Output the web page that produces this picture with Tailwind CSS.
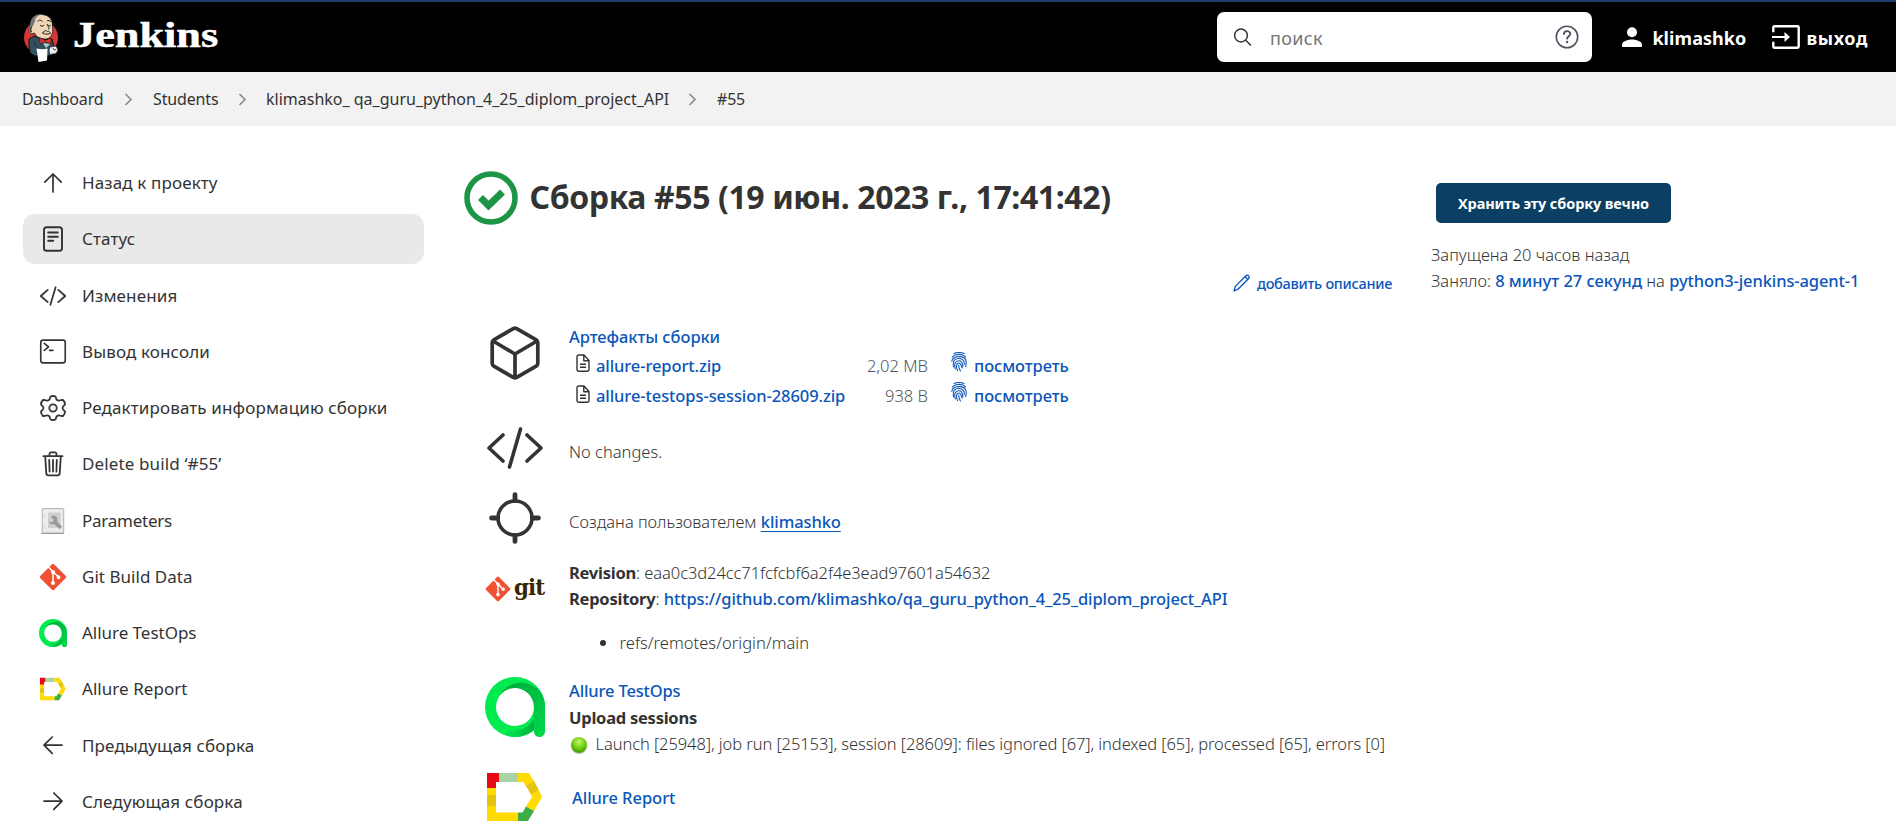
<!DOCTYPE html>
<html lang="ru">
<head>
<meta charset="utf-8">
<title>Сборка #55 – Jenkins</title>
<script src="https://cdn.jsdelivr.net/npm/@tailwindcss/browser@4"></script>
</head>
<body class="bg-white text-[#333] font-['Noto_Sans',sans-serif] text-[16.5px] leading-[26px] h-[822px] overflow-hidden whitespace-nowrap">

<header class="h-[72px] bg-black border-t-2 border-[#1e3e6e] flex text-white">
  <a class="flex pl-[22px]">
    <svg class="w-[38px] h-[51px] mt-[9.5px]" viewBox="0 0 38 51">
      <circle cx="19" cy="25.5" r="17" fill="#d33833"/>
      <path d="M7 27L13 24l8 4 9-1 2 8-1 7-5 2H13l-5-3-1-6z" fill="#335061" stroke="#000" stroke-width=".8"/>
      <path d="M9.500 22C6 20 7 15 8.500 14 9 6 13 2 20 2.500c8 .5 11 6 10.500 13 1 6-1 10-6 11.500-5 0-10-1-12-6z" fill="#f0d6b7" stroke="#111" stroke-width=".8"/>
      <path d="M9.500 22C6 20 6.500 16 8 14 8 5 14 1 21 2.500c-5 .5-7 2-8 6 0 2-1.500 2.500-1.500 5-2 1-2 4-2 8.500z" fill="#70767a"/>
      <path d="M10 15c-2 0-2 4 0 5M15.500 9.500c1-2 4-1.500 5 0M25 9c1-1 3-.5 4 1M18 13c1 1.500 3 1.500 4 0M26 13c1 1 2 1 3 0M25 12c1 3 3 4 1.500 5.500M20.500 21c2-3 4-2.500 5-1.500 2-.5 2.500 1 3 2-2 .5-5 1.500-8-.5z" fill="none" stroke="#222" stroke-width="1"/>
      <path d="M17.500 25.500l5.500 3 6-2.500v6l-6-2-5 2z" fill="#d33833" stroke="#300" stroke-width=".5"/>
      <path d="M21 31l3 5 4-4z" fill="#b8cfda"/>
      <path d="M14.500 36.500c4 1 8 1 11 0l-.5 12-8.500 1.500z" fill="#fff"/>
      <path d="M28 35l6-1 2 4-2 3.500-6 1-1-4z" fill="#eee" stroke="#222" stroke-width=".7"/><path d="M31 36l1 2 2-.5M12 29c2 3 0 5 4 6" fill="none" stroke="#1a2a33" stroke-width=".8"/>
    </svg>
    <span class="ml-[13px] mt-[10px] h-[46px] leading-[46px] font-['Liberation_Serif',serif] font-bold text-[36px] origin-left scale-x-[1.23] [-webkit-text-stroke:.5px_white]">Jenkins</span>
  </a>
  <div class="ml-auto mt-[10px] w-[375px] h-[50px] rounded-[7px] bg-white flex items-center pl-[16px] pr-[13px]">
    <svg class="w-[19px] h-[19px]" viewBox="0 0 19 19" fill="none" stroke="#333" stroke-width="1.5" stroke-linecap="round"><circle cx="8" cy="7.500" r="6.400"/><path d="M12.700 12.200l4.800 4.800"/></svg>
    <span class="ml-[17.500px] pt-[2px] text-[18px] tracking-[.35px] text-[#757575]">поиск</span>
    <svg class="ml-auto w-[24px] h-[24px]" viewBox="0 0 24 24" fill="none" stroke="#4d545d" stroke-width="1.600" stroke-linecap="round"><circle cx="12" cy="12" r="10.700"/><path d="M8.900 9.100c.1-4 6.600-3.800 6.300-.1-.2 2.200-3 2.300-3.100 4.600" stroke-width="1.900"/><circle cx="12.100" cy="17" r=".6" fill="#4d545d" stroke-width="1.200"/></svg>
  </div>
  <a class="ml-[30px] h-[70px] flex items-center font-bold text-[18px]">
    <svg class="w-[20px] h-[20px]" viewBox="0 0 20 20" fill="#fff"><circle cx="10" cy="5.200" r="5"/><path d="M0 20v-2.500c0-3.400 6.500-5 10-5s10 1.600 10 5V20z"/></svg>
    <span class="ml-[10px] pt-[2px] tracking-[.07px]">klimashko</span>
  </a>
  <a class="ml-[26px] mr-[28px] h-[70px] flex items-center font-bold text-[18px]">
    <svg class="w-[28px] h-[24px]" viewBox="0 0 28 24" fill="none" stroke="#fff" stroke-width="2.400"><path d="M1.300 7.200V2.500a1.200 1.200 0 011.200-1.200h23a1.200 1.200 0 011.200 1.200v19a1.200 1.200 0 01-1.200 1.200h-23a1.200 1.200 0 01-1.200-1.200v-4.700"/><path d="M0 12h16" stroke-width="2"/><path d="M12.500 7l5.500 5-5.500 5z" fill="#fff" stroke="none"/></svg>
    <span class="ml-[6px] pt-[2px] tracking-[.6px]">выход</span>
  </a>
</header>

<nav class="h-[54px] bg-[#f2f2f2] flex items-center pl-[22px] text-[16px]">
  <span class="w-[81px] tracking-[-.15px]">Dashboard</span>
  <svg class="ml-[21px] w-[9px] h-[13px]" viewBox="0 0 9 13" fill="none" stroke="#888" stroke-width="1.600"><path d="M1.500 1l5.500 5.500-5.500 5.500"/></svg>
  <span class="ml-[20px] w-[66px] tracking-[-.15px]">Students</span>
  <svg class="ml-[19px] w-[9px] h-[13px]" viewBox="0 0 9 13" fill="none" stroke="#888" stroke-width="1.600"><path d="M1.500 1l5.500 5.500-5.500 5.500"/></svg>
  <span class="ml-[19px] w-[403px]">klimashko_ qa_guru_python_4_25_diplom_project_API</span>
  <svg class="ml-[19px] w-[9px] h-[13px]" viewBox="0 0 9 13" fill="none" stroke="#888" stroke-width="1.600"><path d="M1.500 1l5.500 5.500-5.500 5.500"/></svg>
  <span class="ml-[20px] tracking-[-.2px]">#55</span>
</nav>

<div class="flex">
  <aside class="w-[401px] ml-[23px] pt-[32px] flex flex-col gap-[6.250px] text-[17px] tracking-[.13px]">
    <a class="h-[50px] shrink-0 flex items-center gap-[15px] pl-[16px]"><svg class="w-7 h-7" viewBox="0 0 28 28" fill="none" stroke="#333" stroke-width="1.700" stroke-linecap="round" stroke-linejoin="round"><path d="M5.800 13.200L14 5l8.200 8.200M14 5.500V23"/></svg>Назад к проекту</a>
    <a class="h-[50px] shrink-0 flex items-center gap-[15px] pl-[16px] rounded-[12px] bg-[#e9e9e9]"><svg class="w-7 h-7" viewBox="0 0 28 28" fill="none" stroke="#333" stroke-width="1.900" stroke-linecap="round" stroke-linejoin="round"><rect x="5" y="2.200" width="18" height="23.600" rx="2.600"/><path d="M9.200 7.500h9.600M9.200 11.700h9.600M9.200 15.800h5"/></svg>Статус</a>
    <a class="h-[50px] shrink-0 flex items-center gap-[15px] pl-[16px]"><svg class="w-7 h-7" viewBox="0 0 512 512" fill="none" stroke="#333" stroke-width="32" stroke-linecap="round" stroke-linejoin="round"><path d="M160 368L32 256l128-112M352 368l128-112-128-112M304 96l-96 320"/></svg>Изменения</a>
    <a class="h-[50px] shrink-0 flex items-center gap-[15px] pl-[16px]"><svg class="w-7 h-7" viewBox="0 0 512 512" fill="none" stroke="#333" stroke-width="30" stroke-linecap="round" stroke-linejoin="round"><rect x="32" y="38" width="448" height="416" rx="42"/><path d="M96 98l80 64-80 64M192 226h64"/></svg>Вывод консоли</a>
    <a class="h-[50px] shrink-0 flex items-center gap-[15px] pl-[16px]"><svg class="w-7 h-7" viewBox="0 0 28 28" fill="none" stroke="#333" stroke-width="1.800" stroke-linejoin="round"><circle cx="14" cy="14" r="3.700"/><path d="M11.500 2.500q2.500-1 5 0l1 3q2 1.700 4 .7l2.500-.2q2 1.800 2 4.500l-2 2.200q-1 1.300 0 2.600l2 2.200q0 2.700-2 4.500l-2.500-.2q-2-1-4 .7l-1 3q-2.500 1-5 0l-1-3q-2-1.700-4-.7L4 22q-2-1.800-2-4.500l2-2.200q1-1.300 0-2.600l-2-2.200Q2 7.800 4 6l2.500.2q2 1 4-.7z"/></svg>Редактировать информацию сборки</a>
    <a class="h-[50px] shrink-0 flex items-center gap-[15px] pl-[16px]"><svg class="w-7 h-7" viewBox="0 0 28 28" fill="none" stroke="#333" stroke-width="1.800" stroke-linecap="round" stroke-linejoin="round"><path d="M4.500 6.200h19M6.200 6.500l1.100 16.900a2 2 0 002 1.900h9.400a2 2 0 002-1.900l1.100-16.900M10.500 6V4a1.700 1.700 0 011.700-1.700h3.600A1.700 1.700 0 0117.500 4v2M14 10v11.500M10.200 10l.4 11.500M17.800 10l-.4 11.500"/></svg>Delete build ‘#55’</a>
    <a class="h-[50px] shrink-0 flex items-center gap-[15px] pl-[16px] tracking-[-.05px]"><svg class="w-7 h-7" viewBox="0 0 28 28"><rect x="3.200" y="1.500" width="21.500" height="24.600" rx="1" fill="#e6e6e6" stroke="#b5b5b5"/><rect x="5" y="3" width="18.200" height="21" fill="#ececec"/><rect x="9" y="5.500" width="12.500" height="15.500" fill="#cfcfcf"/><circle cx="5.700" cy="8.500" r=".6" fill="#aaa"/><circle cx="5.700" cy="19" r=".6" fill="#aaa"/><path d="M2.500 26.500h22.500" stroke="#999"/><path d="M12 9.500c2.500-2 6-.8 6.300 2.600.1 1-.2 1.700-.3 2.300l5 5-2.200 2.800-5.800-5.200c-2 .8-4.700 0-5-2l3.300.3 1.500-2.300z" fill="#999"/></svg><span class="tracking-[-.25px]">Parameters</span></a>
    <a class="h-[50px] shrink-0 flex items-center gap-[15px] pl-[16px] tracking-[.03px]"><svg class="w-7 h-7" viewBox="0 0 28 28"><use href="#git"/></svg>Git Build Data</a>
    <a class="h-[50px] shrink-0 flex items-center gap-[15px] pl-[16px] tracking-[-.03px]"><svg class="w-7 h-7" viewBox="0 0 60 60"><use href="#testops"/></svg>Allure TestOps</a>
    <a class="h-[50px] shrink-0 flex items-center gap-[15px] pl-[16px]"><svg class="w-7 h-7" viewBox="0 0 60 60"><use href="#allure"/></svg><span class="tracking-[.05px]">Allure Report</span></a>
    <a class="h-[50px] shrink-0 flex items-center gap-[15px] pl-[16px]"><svg class="w-7 h-7" viewBox="0 0 28 28" fill="none" stroke="#333" stroke-width="1.700" stroke-linecap="round" stroke-linejoin="round"><path d="M13.200 5L5 13.200l8.200 8.200M5.500 13.200H23"/></svg>Предыдущая сборка</a>
    <a class="h-[50px] shrink-0 flex items-center gap-[15px] pl-[16px]"><svg class="w-7 h-7" viewBox="0 0 28 28" fill="none" stroke="#333" stroke-width="1.700" stroke-linecap="round" stroke-linejoin="round"><path d="M14.800 5l8.200 8.200-8.200 8.200M22.500 13.200H5"/></svg>Следующая сборка</a>
  </aside>

  <main class="ml-[40px] w-[928px] pt-[45px] font-light">
    <div class="flex items-center h-[54px]">
      <svg class="w-[54px] h-[54px]" viewBox="0 0 54 54"><circle cx="27" cy="27" r="24" fill="none" stroke="#1e9446" stroke-width="5.600"/><path d="M16.500 26.500l8 8L38.500 21" fill="none" stroke="#1e9446" stroke-width="7"/></svg>
      <h1 class="ml-[11.500px] -mt-[2px] font-bold text-[32px] leading-[44px] tracking-[-.4px]">Сборка #55 (19 июн. 2023 г., 17:41:42)</h1>
    </div>
    <div class="mt-[45px] h-[26px] flex items-center justify-end text-[14.500px] font-medium tracking-[-.29px] text-[#0b56b9]">
      <svg class="w-[18px] h-[18px] mr-[6px]" viewBox="0 0 18 18" fill="none" stroke="#0b56b9" stroke-width="1.300" stroke-linejoin="round"><path d="M1 17l1.300-4.600L12.700 2c.9-.9 2-.9 2.800-.2.900.9.8 2-.1 2.900L5 15.200zM12 2.800L15 5.400"/></svg>добавить описание
    </div>

    <div class="mt-[28px] pl-[21px]">
      <section class="h-[96px] flex">
        <div class="w-[84px] pt-[2px] pl-[4px]"><svg class="w-[52px] h-[54px]" viewBox="0 0 52 54" fill="none" stroke="#333" stroke-width="3.700" stroke-linecap="round" stroke-linejoin="round"><path d="M24.300 2.600a3.600 3.600 0 013.400 0l19.500 11.200a3.400 3.400 0 011.600 2.900v20.600a3.400 3.400 0 01-1.600 2.900L27.700 51.400a3.600 3.600 0 01-3.400 0L4.800 40.200a3.400 3.400 0 01-1.600-2.900V16.700a3.400 3.400 0 011.600-2.900zM4 15l22 13 22-13M26 28v23"/></svg></div>
        <div class="text-[#0b56b9] font-medium">
          <div class="tracking-[-.06px]">Артефакты сборки</div>
          <div class="h-[30px] pl-[7px] flex items-center">
            <svg class="w-[14px] h-[18px] mr-[6px] -mt-[5px]" viewBox="0 0 14 18" fill="none" stroke="#333" stroke-width="1.400" stroke-linejoin="round"><use href="#file"/></svg>
            <span class="w-[249px] pt-[2px] tracking-[-.1px]">allure-report.zip</span>
            <span class="w-[83px] pt-[2px] text-right font-light text-[#4d545d]">2,02 MB</span>
            <svg class="ml-[23px] mr-[7px] w-[16px] h-[20px] -mt-[7px]" viewBox="0 0 16 20" fill="none" stroke="#0b56b9" stroke-width="1.100" stroke-linecap="round"><use href="#finger"/></svg>
            <span class="pt-[2px] tracking-[-.08px]">посмотреть</span>
          </div>
          <div class="h-[30px] pl-[7px] flex items-center">
            <svg class="w-[14px] h-[18px] mr-[6px] -mt-[3px]" viewBox="0 0 14 18" fill="none" stroke="#333" stroke-width="1.400" stroke-linejoin="round"><use href="#file"/></svg>
            <span class="w-[249px] pt-[2px] tracking-[-.08px]">allure-testops-session-28609.zip</span>
            <span class="w-[83px] pt-[2px] text-right font-light text-[#4d545d]">938 B</span>
            <svg class="ml-[23px] mr-[7px] w-[16px] h-[20px] -mt-[7px]" viewBox="0 0 16 20" fill="none" stroke="#0b56b9" stroke-width="1.100" stroke-linecap="round"><use href="#finger"/></svg>
            <span class="pt-[2px] tracking-[-.08px]">посмотреть</span>
          </div>
        </div>
      </section>

      <section class="h-[66px] flex">
        <div class="w-[84px] pt-[7px] pl-[2px]"><svg class="w-[56px] h-[42px]" viewBox="0 0 56 42" fill="none" stroke="#333" stroke-width="3.600" stroke-linecap="round" stroke-linejoin="round"><path d="M16 8L2 21l14 13M40 8l14 13-14 13M33.500 2l-11 38"/></svg></div>
        <div class="pt-[19px]">No changes.</div>
      </section>

      <section class="h-[65px] flex">
        <div class="w-[84px] pt-[6px] pl-[4px]"><svg class="w-[52px] h-[52px]" viewBox="0 0 52 52" fill="none" stroke="#333" stroke-width="3.600" stroke-linecap="round"><circle cx="26" cy="26" r="17"/><path stroke-width="4.800" d="M26 2.600v6M26 43.400v6M2.600 26h6M43.400 26h6"/></svg></div>
        <div class="pt-[23px]">Создана пользователем <a class="font-medium text-[#0b56b9] underline underline-offset-[3px] decoration-1 tracking-[-.1px]">klimashko</a></div>
      </section>

      <section class="h-[117px] flex">
        <div class="w-[84px] pt-[25px] flex items-start">
          <svg class="w-[26px] h-[26px] shrink-0" viewBox="0 0 28 28"><use href="#git"/></svg>
          <span class="ml-[3px] -mt-[2px] font-['DejaVu_Serif',serif] font-bold text-[23px] leading-[26px] tracking-[-1px] text-[#362701] origin-left scale-x-[.93]">git</span>
        </div>
        <div class="pt-[9px]">
          <div><b class="font-bold tracking-[-.25px]">Revision</b>: <span class="tracking-[-.08px]">eaa0c3d24cc71fcfcbf6a2f4e3ead97601a54632</span></div>
          <div><b class="font-bold tracking-[-.25px]">Repository</b>: <a class="font-medium text-[#0b56b9] tracking-[-.11px]">https://github.com/klimashko/qa_guru_python_4_25_diplom_project_API</a></div>
          <div class="mt-[18px] pl-[31px] flex items-center"><i class="w-[6px] h-[6px] rounded-full bg-[#333] mr-[13.500px]"></i><span class="tracking-[.05px]">refs/remotes/origin/main</span></div>
        </div>
      </section>

      <section class="h-[94px] flex">
        <div class="w-[84px] pt-[9px]"><svg class="w-[60px] h-[60px]" viewBox="0 0 60 60"><use href="#testops"/></svg></div>
        <div class="pt-[10px]">
          <div class="font-medium text-[#0b56b9] tracking-[-.15px]">Allure TestOps</div>
          <div class="font-bold tracking-[-.25px] pt-px -mb-px">Upload sessions</div>
          <div class="flex items-center pl-[2px] pt-px"><i class="w-[16px] h-[16px] mr-[8.500px] mt-[1px] rounded-full bg-[radial-gradient(circle_at_50%_32%,#c9f56a,#6fd015_45%,#3f8f00_85%)] shadow-[0_1px_1px_#0004]"></i><span class="tracking-[-.085px]">Launch [25948], job run [25153], session [28609]: files ignored [67], indexed [65], processed [65], errors [0]</span></div>
        </div>
      </section>

      <section class="h-[60px] flex">
        <div class="w-[87px] pt-[5px]"><svg class="w-[60px] h-[60px]" viewBox="0 0 60 60"><use href="#allure"/></svg></div>
        <div class="pt-[23px] font-medium text-[#0b56b9] tracking-[-.05px]">Allure Report</div>
      </section>
    </div>
  </main>

  <div class="ml-[39px] pt-[57px] font-light">
    <button class="ml-[5px] w-[235px] h-[40px] rounded-[5px] bg-[#0b3f63] text-white font-bold text-[14.500px] tracking-[-.12px]">Хранить эту сборку вечно</button>
    <div class="mt-[19px]">Запущена 20 часов назад</div>
    <div>Заняло: <a class="font-medium text-[#0b56b9] tracking-[-.03px]">8 минут 27 секунд</a> на <a class="font-medium text-[#0b56b9] tracking-[-.11px]">python3-jenkins-agent-1</a></div>
  </div>
</div>

<svg class="absolute w-0 h-0">
  <defs>
    <linearGradient id="g1" x1="0" y1="0" x2="1" y2="1"><stop offset="0" stop-color="#00a63a"/><stop offset="1" stop-color="#00d94d"/></linearGradient>
    <linearGradient id="g2" x1="1" y1="0" x2="0" y2="0"><stop offset="0" stop-color="#00b33c"/><stop offset="1" stop-color="#00f556"/></linearGradient>
  </defs>
  <symbol id="git" viewBox="0 0 28 28">
    <rect x="4.200" y="4.200" width="19.600" height="19.600" rx="1.500" transform="rotate(45 14 14)" fill="#f05133"/><g stroke="#fff" stroke-width="1.500" fill="#fff"><path d="M9.300 3.800L14 8.700V20M14 8.700l5.500 5.500" fill="none"/><circle cx="14" cy="9" r="1.200"/><circle cx="14" cy="20" r="1.200"/><circle cx="19.500" cy="14.200" r="1.200"/></g>
  </symbol>
  <symbol id="testops" viewBox="0 0 60 60">
    <path fill-rule="evenodd" d="M30 0a30 30 0 100 60 30 30 0 000-60zm0 11a19 19 0 110 38 19 19 0 010-38z" fill="#00eb50"/>
    <path d="M49 42c-5 8-14 13-24 12l-12-1c5 4.500 11 7 17 7 8 0 14-3 19-7z" fill="url(#g2)"/>
    <path d="M15 18C19 10 29 5 39 6c8 1 14 5 17.500 10C59 20 60 25 60 30v24.500a5.500 5.500 0 01-11 0V30c0-10-8-19-19-19-6 0-11 2-15 7z" fill="url(#g1)"/>
  </symbol>
  <symbol id="allure" viewBox="0 0 60 60">
    <path d="M2 6h12v9h-3v6H2z" fill="#e60b12"/><path d="M14 6h19v9H14z" fill="#a7d3a5"/>
    <path d="M33 6h11l5.500 9-8.500 4.500-2.500-4.500H33z" fill="#ffdb00"/><path d="M49 14l5 9.500-8 4-5-8.500z" fill="#e2c411"/>
    <path d="M54 23.500L57 30l-8 14-8-4.500L47 30l-1.500-3z" fill="#ffdb00"/><path d="M41 39.500l8 4.500-6 10H33v-8.500h4.500z" fill="#3ead48"/>
    <path d="M2 21h9v7H2zM2 39h9v6.500h22V54H2z" fill="#ffdb00"/><path d="M2 28h9v11H2z" fill="#e2c411"/>
  </symbol>
  <symbol id="file" viewBox="0 0 14 18" overflow="visible"><path d="M3 1h5l5 5.500V15.500a1.700 1.700 0 01-1.700 1.700H2.700A1.700 1.700 0 011 15.500V2.700A1.700 1.700 0 012.700 1zM7.800 1v5.700H13M4 10.200h6M4 13.300h6"/></symbol>
  <symbol id="finger" viewBox="0 0 16 20" overflow="visible"><path d="M3 1.600C6 .3 10 .3 13 1.600M1.300 4.800c3.200-3.300 10.200-3.300 13.400 0M.8 9.500C1.500 3.300 14 2.600 15.200 9.500c.1 2 0 3.500-.7 5M2.500 15C1.500 8 4 6.500 8 6.500s5.700 3 5.200 6M4.300 17C3 12 4 8.800 8 8.800c3.500 0 3.600 3.500 4 6M6.500 18.600C5 15 5 11 8 11c2 0 2 3 3.200 5M9.500 19C8 17 7.600 15 7.800 13"/></symbol>
</svg>
</body>
</html>
